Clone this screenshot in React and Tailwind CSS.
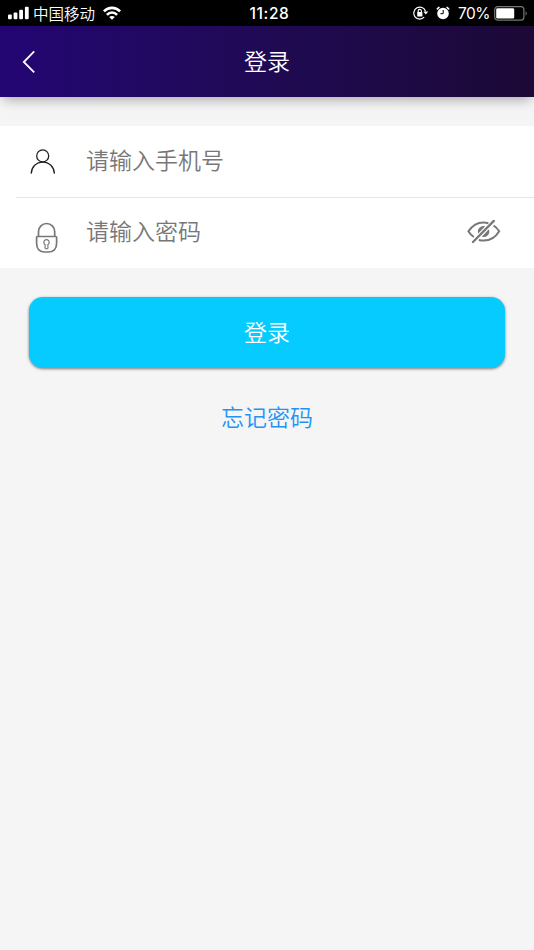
import { useState } from 'react';

const SignalIcon = () => (
  <svg width="21" height="14" viewBox="0 0 21 14" fill="#fff">
    <rect x="0" y="8.5" width="3.8" height="4.8" rx="1" />
    <rect x="5.6" y="6.5" width="3.8" height="6.8" rx="1" />
    <rect x="11.2" y="3.7" width="3.8" height="9.6" rx="1" />
    <rect x="16.9" y="0.7" width="3.8" height="12.6" rx="1" />
  </svg>
);

const WifiIcon = () => (
  <svg width="18" height="14" viewBox="0 0 18 14" fill="none" stroke="#fff" strokeWidth="2.6">
    <path d="M0.9 5.4C5.5 0.7 12.5 0.7 17.1 5.4" />
    <path d="M3.9 8.8C6.8 5.8 11.2 5.8 14.1 8.8" />
    <path d="M9 13.8L6.2 11C7.8 9.6 10.2 9.6 11.8 11Z" fill="#fff" stroke="none" />
  </svg>
);

const RotationLockIcon = () => (
  <svg width="16" height="14" viewBox="0 0 16 14" fill="none" stroke="#fff" strokeWidth="1.2">
    <path d="M12.5 5.2A6 6 0 1 0 11.2 11.2" />
    <path d="M10.4 5.6H15.2L12.8 8.6Z" fill="#fff" stroke="none" />
    <rect x="4.2" y="6.1" width="5.2" height="4.3" rx="0.5" fill="#fff" stroke="none" />
    <path d="M5.2 6.3V5A1.6 1.6 0 0 1 8.4 5V6.3" />
  </svg>
);

const AlarmIcon = () => (
  <svg width="14" height="14" viewBox="0 0 14 14">
    <circle cx="7" cy="7.5" r="5.8" fill="#fff" />
    <path d="M1.3 2.9L3 1.4M12.7 2.9L11 1.4" stroke="#fff" strokeWidth="1.5" strokeLinecap="round" />
    <path d="M7.2 4V7.7H4.4" fill="none" stroke="#000" strokeWidth="1" />
  </svg>
);

const BatteryIcon = () => (
  <svg width="34" height="15" viewBox="0 0 34 15">
    <rect x="0.7" y="0.7" width="29.2" height="13.5" rx="3" fill="none" stroke="#777" strokeWidth="1.2" />
    <rect x="2.2" y="2.2" width="18" height="10.4" rx="1.4" fill="#fff" />
    <path d="M31.6 5.3C33.2 6 33.2 9 31.6 9.7Z" fill="#777" />
  </svg>
);

const BackIcon = () => (
  <svg width="15" height="24" viewBox="0 0 15 24" fill="none" stroke="#fff" strokeWidth="1.8">
    <path d="M13.2 1.4L2.8 12L13.2 22.4" />
  </svg>
);

const UserIcon = () => (
  <svg width="26" height="26" viewBox="0 0 26 26" fill="none" stroke="#222" strokeWidth="1.3">
    <circle cx="12.7" cy="6.9" r="6" />
    <path d="M1.2 24.6C1.6 17.8 6.3 13.1 12.8 13.1S24 17.8 24.4 24.6" />
  </svg>
);

const LockIcon = () => (
  <svg width="24" height="32" viewBox="0 0 24 32" fill="none" stroke="#777" strokeWidth="1.7">
    <path d="M3.5 14.2V9.6A8.1 8.1 0 0 1 19.7 9.6V14.2" />
    <path d="M2.2 14.5H20.8Q21.6 14.5 21.6 15.3V21.2C21.6 27.2 18.4 30 13.3 30H9.9C4.7 30 1.6 27.2 1.6 21.2V15.3Q1.6 14.5 2.2 14.5Z" />
    <path d="M10.2 22.7A2.7 2.7 0 1 1 12.8 22.7L13 25.7Q13 26.8 11.5 26.8T10 25.7Z" strokeWidth="1.2" />
  </svg>
);

const EyeOffIcon = () => (
  <svg width="34" height="24" viewBox="0 0 34 24" fill="none" stroke="#777" strokeWidth="2">
    <path d="M21.4 3.2C15.2 1.6 7.2 3 1.4 11.3C2.9 13.8 4.6 15.6 6.8 17" />
    <path d="M26.6 5.5C28.9 7 30.6 8.8 32.2 11.3C27.3 19.4 19.5 21.6 11.8 20" />
    <path d="M11.2 13.6A5.7 5.7 0 0 1 18.2 6.2Z" fill="#777" stroke="none" />
    <path d="M21.8 9.2A5.6 5.6 0 0 1 14.8 16.7Z" fill="#777" stroke="none" />
    <path d="M6 22L26.8 0.9" strokeWidth="2.3" strokeLinecap="round" />
  </svg>
);

const inputClass =
  'min-w-0 flex-1 h-full bg-transparent pb-[6px] text-[23px] font-[350] text-[#777] placeholder:text-[#777] placeholder:opacity-100 outline-none';

const App = () => {
  const [phone, setPhone] = useState('');
  const [password, setPassword] = useState('');
  const [visible, setVisible] = useState(false);

  return (
    <div className="flex min-h-screen w-full flex-col bg-[#f5f5f5] font-['Noto_Sans_CJK_SC','Noto_Sans',sans-serif]">
      {/* 状态栏 */}
      <div className="grid h-[26px] grid-cols-3 items-center bg-black pl-2 pr-[6px] text-white">
        <div className="flex items-center">
          <SignalIcon />
          <span className="ml-1 text-[15.5px] leading-[26px] font-[350]">中国移动</span>
          <span className="ml-2"><WifiIcon /></span>
        </div>
        <div className="pt-[2px] pl-[3px] text-center font-[Inter,sans-serif] text-[15.5px] leading-6 font-medium tracking-[0.6px]">11:28</div>
        <div className="flex items-center justify-end">
          <RotationLockIcon />
          <span className="ml-[7px]"><AlarmIcon /></span>
          <span className="mr-1 ml-2 pt-[2px] font-[Inter,sans-serif] text-[15.5px] leading-6 tracking-[-0.5px]">70%</span>
          <BatteryIcon />
        </div>
      </div>

      {/* 标题栏 */}
      <header className="grid h-[71px] grid-cols-3 items-center bg-linear-to-r from-[#230573] to-[#1c0936] px-[21px] text-white shadow-[0_5px_12px_-3px_rgba(0,0,0,0.35)]">
        <button className="w-fit" aria-label="返回"><BackIcon /></button>
        <h1 className="pb-1 text-center text-[23px] leading-8 font-[350]">登录</h1>
      </header>

      {/* 登录表单 */}
      <form className="mt-[29px]" onSubmit={(e) => e.preventDefault()}>
        <div className="bg-white pl-4">
          <label className="flex h-[72px] items-center border-b border-[#e5e5e5] pl-[14px]">
            <UserIcon />
            <span className="w-[30px]" />
            <input className={inputClass} placeholder="请输入手机号" value={phone} onChange={(e) => setPhone(e.target.value)} />
          </label>
          <div className="flex h-[70px] items-center pr-[33px] pl-[19px]">
            <span className="mr-[27px] pt-[9px]"><LockIcon /></span>
            <input
              className={inputClass}
              type={visible ? 'text' : 'password'}
              placeholder="请输入密码"
              value={password}
              onChange={(e) => setPassword(e.target.value)}
            />
            <button type="button" aria-label="显示密码" className="pb-[3px]" onClick={() => setVisible(!visible)}>
              <EyeOffIcon />
            </button>
          </div>
        </div>

        <div className="px-[29px] pt-[29px]">
          <button className="h-[71px] w-full rounded-[14px] bg-[#05cbff] pb-[2px] text-[23px] font-[350] text-white shadow-[0_1px_3px_rgba(0,0,0,0.5)]">
            登录
          </button>
        </div>
      </form>

      <a href="#" className="mx-auto mt-[31px] text-[23px] leading-[34px] font-[350] text-[#2593f5]">忘记密码</a>
    </div>
  );
};

export default App;
